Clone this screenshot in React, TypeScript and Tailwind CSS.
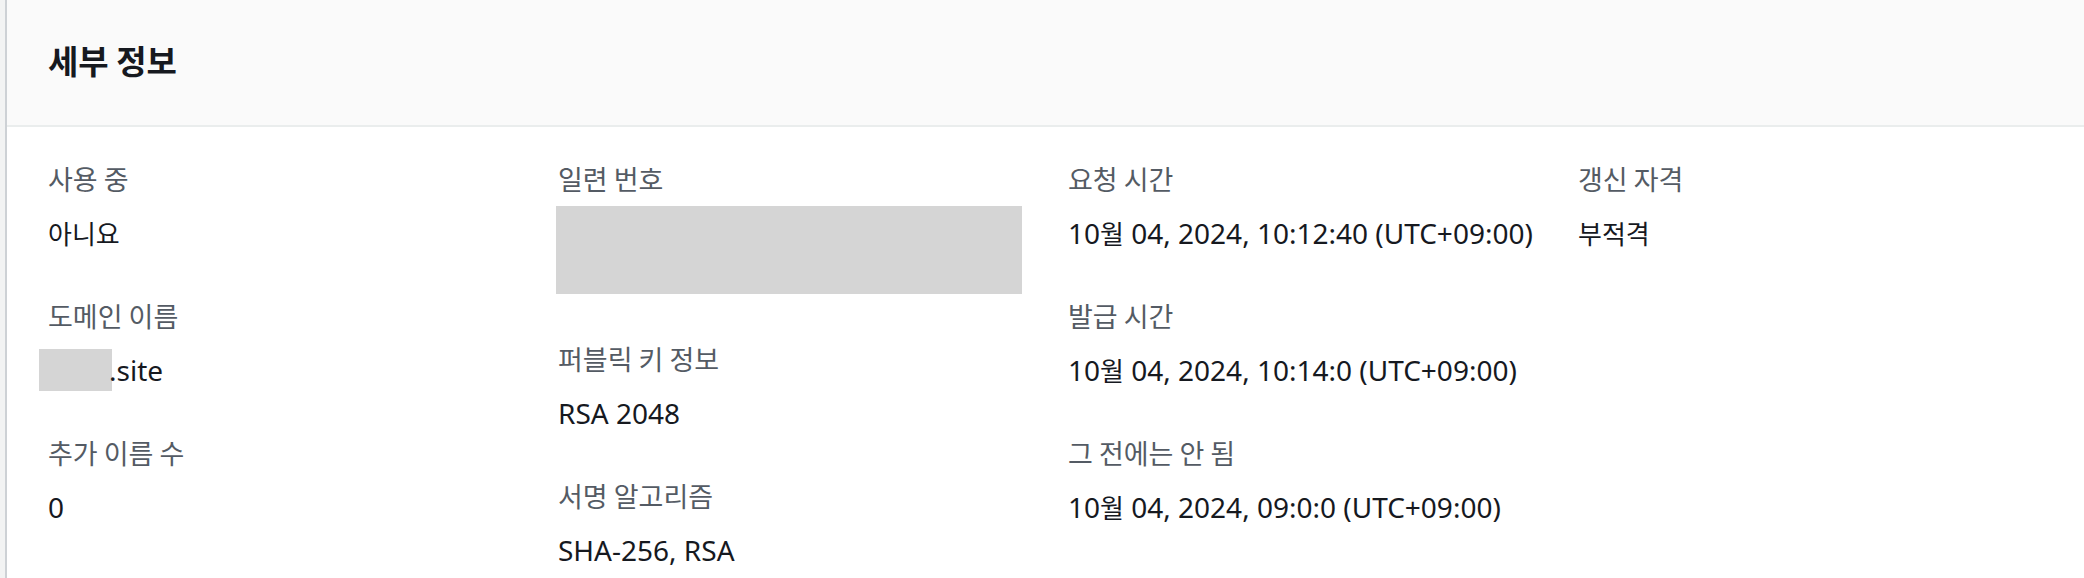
const latin = "font-['Noto_Sans','Noto_Sans_CJK_KR',sans-serif]";
const korean = "font-['Noto_Sans_CJK_KR','Noto_Sans',sans-serif]";

type Item = {
  label: string;
  value: React.ReactNode;
};

function Ko({ children }: { children: React.ReactNode }) {
  return <span className={`${korean} text-[26px]`}>{children}</span>;
}

function Redacted({ className }: { className: string }) {
  return <div className={`bg-[#d5d5d5] ${className}`} />;
}

const columns: Item[][] = [
  [
    { label: "사용 중", value: <Ko>아니요</Ko> },
    {
      label: "도메인 이름",
      value: (
        <span className="flex items-center">
          <span className="-ml-[9px] inline-block h-[42px] w-[73px] bg-[#d5d5d5]" />
          <span className="-ml-[3px]">.site</span>
        </span>
      ),
    },
    { label: "추가 이름 수", value: "0" },
  ],
  [
    {
      label: "일련 번호",
      value: <Redacted className="-ml-[2px] -mt-[5px] mb-1 h-[88px] w-[466px]" />,
    },
    { label: "퍼블릭 키 정보", value: "RSA 2048" },
    { label: "서명 알고리즘", value: "SHA-256, RSA" },
  ],
  [
    {
      label: "요청 시간",
      value: (
        <>
          10<Ko>월</Ko> 04, 2024, 10:12:40 (UTC+09:00)
        </>
      ),
    },
    {
      label: "발급 시간",
      value: (
        <>
          10<Ko>월</Ko> 04, 2024, 10:14:0 (UTC+09:00)
        </>
      ),
    },
    {
      label: "그 전에는 안 됨",
      value: (
        <>
          10<Ko>월</Ko> 04, 2024, 09:0:0 (UTC+09:00)
        </>
      ),
    },
    {
      label: "그 후에는 안 됨",
      value: (
        <>
          10<Ko>월</Ko> 04, 2025, 08:59:59 (UTC+09:00)
        </>
      ),
    },
  ],
  [{ label: "갱신 자격", value: <Ko>부적격</Ko> }],
];

export default function App() {
  return (
    <div className="flex h-[578px] w-[2084px] overflow-hidden bg-white">
      <div className="w-[5px] shrink-0 bg-[#f2f3f3]" />
      <section className="flex min-w-0 flex-1 flex-col border-l-2 border-[#cdd1d5]">
        <header className="flex h-[127px] shrink-0 items-center border-b-2 border-[#eaeded] bg-[#fafafa] pb-1 pl-[41px]">
          <h2 className={`${korean} text-[33px] font-bold leading-none text-[#16191f]`}>
            세부 정보
          </h2>
        </header>
        <div className={`grid grid-cols-[510px_510px_510px_1fr] pl-[41px] pt-[30px] ${latin} text-[28px] text-[#16191f]`}>
          {columns.map((items, index) => (
            <dl className="flex flex-col gap-[39px]" key={index}>
              {items.map((item) => (
                <div className="flex flex-col" key={item.label}>
                  <dt className={`${korean} text-[27px] leading-[44px] text-[#545b64]`}>
                    {item.label}
                  </dt>
                  <dd className="mt-[10px] leading-[44px]">{item.value}</dd>
                </div>
              ))}
            </dl>
          ))}
        </div>
      </section>
    </div>
  );
}
